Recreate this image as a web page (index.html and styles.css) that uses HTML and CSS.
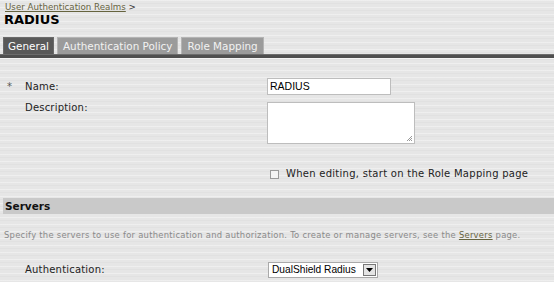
FILE: index.html
```html
<!DOCTYPE html>
<html>
<head>
<meta charset="utf-8">
<link rel="stylesheet" href="styles.css">
</head>
<body>
<div class="page">
  <div class="crumb"><a href="#">User Authentication Realms</a> &gt;</div>
  <h1 class="title">RADIUS</h1>
  <div class="tabs">
    <span class="tab active">General</span>
    <span class="tab">Authentication Policy</span>
    <span class="tab">Role Mapping</span>
  </div>
  <div class="tabbar"></div>

  <div class="form">
    <span class="req">*</span>
    <label class="lbl">Name:</label>
    <div class="field"><span class="input">RADIUS</span></div>

    <span class="req"></span>
    <label class="lbl lbl-top">Description:</label>
    <div class="field"><span class="textarea"><svg class="grip" width="7" height="7" viewBox="0 0 7 7"><path d="M6 1L1 6M6 3L3 6M6 5L5 6" stroke="#999" stroke-width="1" fill="none"/></svg></span></div>

    <span class="req"></span>
    <span class="lbl"></span>
    <div class="field check-row"><span class="checkbox"></span><span class="check-text">When editing, start on the Role Mapping page</span></div>
  </div>

  <div class="section">Servers</div>
  <p class="hint">Specify the servers to use for authentication and authorization. To create or manage servers, see the <a href="#">Servers</a> page.</p>

  <div class="form form-servers">
    <span class="req"></span>
    <label class="lbl">Authentication:</label>
    <div class="field">
      <span class="select"><span class="select-text">DualShield Radius</span><span class="select-btn"><svg width="7" height="4" viewBox="0 0 7 4"><path d="M0 0H7L3.5 4Z" fill="#000"/></svg></span></span>
    </div>
  </div>
</div>
</body>
</html>
```

FILE: styles.css
```css
html, body {
  margin: 0;
  padding: 0;
}
body {
  width: 554px;
  height: 282px;
  overflow: hidden;
  background-color: #e6e6e6;
  background-image:
    repeating-linear-gradient(180deg, rgba(255,255,255,0.35) 0 1px, rgba(0,0,0,0) 1px 3px, rgba(0,0,0,0.025) 3px 4px, rgba(0,0,0,0) 4px 7px);
  font-family: "DejaVu Sans", Verdana, sans-serif;
  color: #222;
}
.page {
  padding-top: 2px;
}
.crumb {
  padding-left: 5px;
  font-size: 8.7px;
  line-height: 10px;
  color: #333;
}
.crumb a {
  color: #66643f;
  text-decoration: underline;
}
.title {
  margin: 0;
  padding-left: 4px;
  font-size: 13px;
  font-weight: bold;
  line-height: 15px;
  color: #000;
}
.tabs {
  display: flex;
  gap: 3px;
  margin-top: 10px;
  padding-left: 3px;
}
.tab {
  box-sizing: border-box;
  height: 17px;
  padding: 0 5px;
  font-size: 10.4px;
  line-height: 16px;
  background: #9b9b9b;
  color: #f2f2f2;
  border: 1px solid #b4b4b4;
  border-bottom: none;
}
.tab.active {
  padding: 0 4px;
  background: #595959;
  border-color: #6a6a6a;
  color: #fff;
}
.tabbar {
  height: 3px;
  background: #4f4f4f;
  border-top: 1px solid #6c6c6c;
  border-bottom: 1px solid #f4f4f4;
}
.form {
  display: grid;
  grid-template-columns: 25px 242px 1fr;
  row-gap: 7px;
  margin-top: 19px;
  align-items: center;
}
.req {
  padding-left: 7px;
  font-size: 10px;
  color: #555;
}
.lbl {
  font-size: 10px;
  line-height: 12px;
  letter-spacing: 0.2px;
  color: #222;
}
.lbl-top {
  align-self: start;
}
.input {
  display: block;
  box-sizing: border-box;
  width: 124px;
  height: 17px;
  background: #fff;
  border: 1px solid #bdbdbd;
  padding-left: 2px;
  font-family: "Liberation Sans", Arial, sans-serif;
  font-size: 10.5px;
  line-height: 15px;
  color: #000;
}
.textarea {
  display: block;
  position: relative;
  box-sizing: border-box;
  width: 148px;
  height: 42px;
  background: #fff;
  border: 1px solid #bdbdbd;
}
.grip {
  position: absolute;
  right: 1px;
  bottom: 1px;
}
.check-row {
  display: flex;
  align-items: center;
  margin-top: 17px;
  padding-left: 3px;
}
.checkbox {
  box-sizing: border-box;
  width: 9px;
  height: 9px;
  border: 1px solid #9a9a9a;
  background: #f4f4f4;
}
.check-text {
  margin-left: 7px;
  font-size: 10px;
  line-height: 12px;
  letter-spacing: 0.27px;
  color: #222;
}
.section {
  margin: 18px 0 0 3px;
  height: 16px;
  padding-left: 2px;
  background: #c9c9c9;
  font-size: 10.5px;
  font-weight: bold;
  line-height: 16px;
  color: #111;
}
.hint {
  margin: 16px 0 0 4px;
  font-size: 8.4px;
  line-height: 10px;
  letter-spacing: 0.27px;
  color: #8a8a8a;
}
.hint a {
  color: #66643f;
  text-decoration: underline;
}
.form-servers {
  margin-top: 22px;
}
.select {
  display: flex;
  align-items: center;
  box-sizing: border-box;
  width: 110px;
  height: 16px;
  margin-left: 1px;
  background: #fff;
  border: 1px solid #a9a9a9;
}
.select-text {
  flex: 1;
  padding-left: 3px;
  font-family: "Liberation Sans", Arial, sans-serif;
  font-size: 10.2px;
  line-height: 14px;
  color: #000;
}
.select-btn {
  display: flex;
  align-items: center;
  justify-content: center;
  box-sizing: border-box;
  width: 13px;
  height: 12px;
  margin-right: 1px;
  background: #e4e4e4;
  border: 1px solid #777;
}
```
